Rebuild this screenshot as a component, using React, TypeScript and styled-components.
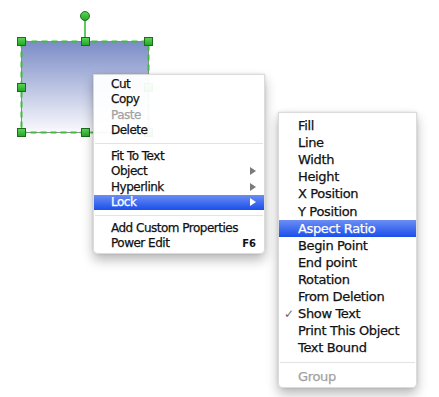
import * as React from 'react';
import styled, { createGlobalStyle, css } from 'styled-components';

type Entry =
    | { kind: 'item'; label: string; active?: boolean; disabled?: boolean; submenu?: boolean; shortcut?: string; checked?: boolean }
    | { kind: 'sep' };

const editMenu: Entry[] = [
    { kind: 'item', label: 'Cut' },
    { kind: 'item', label: 'Copy' },
    { kind: 'item', label: 'Paste', disabled: true },
    { kind: 'item', label: 'Delete' },
    { kind: 'sep' },
    { kind: 'item', label: 'Fit To Text' },
    { kind: 'item', label: 'Object', submenu: true },
    { kind: 'item', label: 'Hyperlink', submenu: true },
    { kind: 'item', label: 'Lock', submenu: true, active: true },
    { kind: 'sep' },
    { kind: 'item', label: 'Add Custom Properties' },
    { kind: 'item', label: 'Power Edit', shortcut: 'F6' },
];

const lockMenu: Entry[] = [
    { kind: 'item', label: 'Fill' },
    { kind: 'item', label: 'Line' },
    { kind: 'item', label: 'Width' },
    { kind: 'item', label: 'Height' },
    { kind: 'item', label: 'X Position' },
    { kind: 'item', label: 'Y Position' },
    { kind: 'item', label: 'Aspect Ratio', active: true },
    { kind: 'item', label: 'Begin Point' },
    { kind: 'item', label: 'End point' },
    { kind: 'item', label: 'Rotation' },
    { kind: 'item', label: 'From Deletion' },
    { kind: 'item', label: 'Show Text', checked: true },
    { kind: 'item', label: 'Print This Object' },
    { kind: 'item', label: 'Text Bound' },
    { kind: 'sep' },
    { kind: 'item', label: 'Group', disabled: true },
];

const handles: [number, number][] = [
    [21, 41], [85, 41], [148, 41],
    [21, 87], [148, 87],
    [21, 132], [85, 132], [148, 132],
];

const PopupMenu: React.FC<IPopupMenuProps> = ({ entries, left, top, width, font, track, row, indent, sep, padTop, padBottom }) => {
    return (
        <MenuPanel
            $left={left}
            $top={top}
            $width={width}
            $font={font}
            $track={track}
            $row={row}
            $indent={indent}
            $sep={sep}
            $padTop={padTop}
            $padBottom={padBottom}
        >
            {entries.map((e, i) =>
                e.kind === 'sep' ? (
                    <Separator key={i} />
                ) : (
                    <Item key={i} $active={e.active} $disabled={e.disabled}>
                        {e.checked && <Check>✓</Check>}
                        <Label>{e.label}</Label>
                        {e.submenu && <Arrow $active={e.active} />}
                        {e.shortcut && <Shortcut>{e.shortcut}</Shortcut>}
                    </Item>
                )
            )}
        </MenuPanel>
    );
};

const App: React.FC = () => {
    return (
        <>
            <GlobalStyle />
            <Canvas>
                <ShapeLayer width={160} height={140} viewBox="0 0 160 140">
                    <defs>
                        <linearGradient id="shapeFill" x1="0" y1="0" x2="0" y2="1">
                            <stop offset="0" stopColor="#7b8cc7" />
                            <stop offset="1" stopColor="#fafafd" />
                        </linearGradient>
                        <linearGradient id="handleFill" x1="0" y1="0" x2="0" y2="1">
                            <stop offset="0" stopColor="#5bd65b" />
                            <stop offset="1" stopColor="#23a523" />
                        </linearGradient>
                    </defs>
                    <rect x={21.5} y={41.5} width={127} height={91} fill="url(#shapeFill)" stroke="#8a8a8a" />
                    <rect x={21.5} y={41.5} width={127} height={91} fill="none" stroke="#3dbd3d" strokeWidth={2} strokeDasharray="6 4" />
                    <line x1={85} y1={20} x2={85} y2={38} stroke="#2fb82f" strokeWidth={1.5} />
                    <circle cx={85} cy={16} r={4.5} fill="url(#handleFill)" stroke="#1c721c" />
                    {handles.map(([x, y]) => (
                        <rect key={`${x}-${y}`} x={x - 3.5} y={y - 3.5} width={8} height={8} fill="url(#handleFill)" stroke="#1c6c1c" />
                    ))}
                </ShapeLayer>

                <PopupMenu entries={editMenu} left={93} top={74} width={172} font={12} track={-0.5} row={15.5} indent={17} sep={10} padTop={1} padBottom={2} />
                <PopupMenu entries={lockMenu} left={278} top={112} width={139} font={13} track={-0.35} row={17.1} indent={19} sep={12} padTop={4} padBottom={2} />
            </Canvas>
        </>
    );
};

const GlobalStyle = createGlobalStyle`
    html, body {
        margin: 0;
        padding: 0;
        background: #fff;
    }

    body {
        font-family: "DejaVu Sans", "Liberation Sans", sans-serif;
    }
`;

const Canvas = styled.div`
    position: relative;
    width: 439px;
    height: 397px;
    overflow: hidden;
    background: #fff;
`;

const ShapeLayer = styled.svg`
    display: block;
`;

const MenuPanel = styled.div<{
    $left: number; $top: number; $width: number; $font: number; $track: number; $row: number;
    $indent: number; $sep: number; $padTop: number; $padBottom: number;
}>`
    --row: ${p => p.$row}px;
    --indent: ${p => p.$indent}px;
    --sep: ${p => p.$sep}px;
    position: absolute;
    left: ${p => p.$left}px;
    top: ${p => p.$top}px;
    width: ${p => p.$width}px;
    box-sizing: border-box;
    display: flex;
    flex-direction: column;
    padding: ${p => p.$padTop}px 0 ${p => p.$padBottom}px;
    background: rgba(255, 255, 255, 0.95);
    border: 1px solid rgba(0, 0, 0, 0.14);
    border-radius: 0 0 5px 5px;
    box-shadow: 0 6px 12px rgba(0, 0, 0, 0.28), 0 0 3px rgba(0, 0, 0, 0.12);
    font-size: ${p => p.$font}px;
    letter-spacing: ${p => p.$track}px;
    color: #111;
    -webkit-text-stroke: 0.25px currentColor;
`;

const Item = styled.div<{ $active?: boolean; $disabled?: boolean }>`
    position: relative;
    display: flex;
    align-items: center;
    height: var(--row);
    padding: 0 7px 0 var(--indent);
    white-space: nowrap;

    ${p => p.$disabled && css`
        color: #a2a2a2;
    `}

    ${p => p.$active && css`
        background: linear-gradient(#6b8ef4, #1a4fea);
        color: #fff;
    `}
`;

const Label = styled.span`
    flex: 1;
`;

const Check = styled.span`
    position: absolute;
    left: 5px;
    color: #666;
    font-size: 12px;
    -webkit-text-stroke: 0;
`;

const Arrow = styled.span<{ $active?: boolean }>`
    width: 0;
    height: 0;
    border-top: 4px solid transparent;
    border-bottom: 4px solid transparent;
    border-left: 6px solid ${p => (p.$active ? '#fff' : '#7a7a7a')};
    margin-right: 1px;
`;

const Shortcut = styled.span`
    font-size: 10px;
    font-weight: bold;
    letter-spacing: 0;
    margin-right: 1px;
    -webkit-text-stroke: 0;
`;

const Separator = styled.div`
    display: flex;
    align-items: center;
    height: var(--sep);

    &::before {
        content: '';
        flex: 1;
        height: 1px;
        margin: 0 1px;
        background: #e3e3e3;
    }
`;

interface IPopupMenuProps {
    entries: Entry[];
    left: number;
    top: number;
    width: number;
    font: number;
    track: number;
    row: number;
    indent: number;
    sep: number;
    padTop: number;
    padBottom: number;
}

export default App;
